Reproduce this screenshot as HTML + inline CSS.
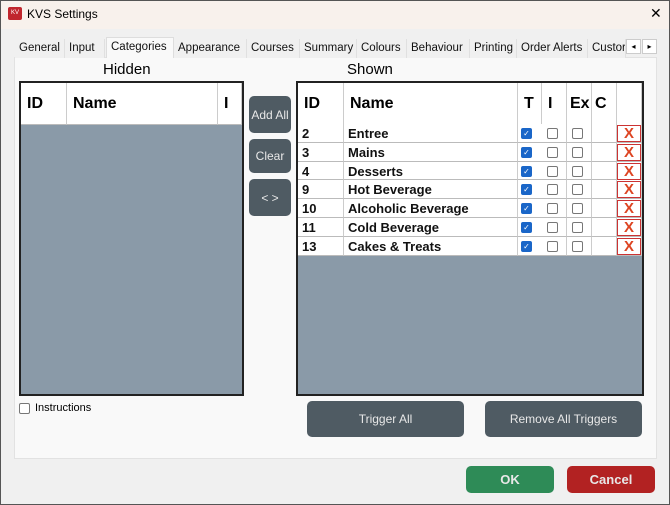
<!DOCTYPE html><html><head><style>
*{box-sizing:border-box;margin:0;padding:0}
body{width:670px;height:505px;background:#f0f0f0;font-family:"Liberation Sans",sans-serif;position:relative;overflow:hidden;}
.frame{position:absolute;left:0;top:0;width:670px;height:505px;border:1px solid #555;pointer-events:none;z-index:9}
.a{position:absolute}
.tab{position:absolute;top:39px;height:19px;font-size:11.5px;line-height:19px;padding:0 4px;background:#f0f0f0;border-right:1px solid #e0e0e0;color:#111;white-space:nowrap;overflow:hidden}
.btn{position:absolute;background:#4f5b63;color:#e8e8e8;border-radius:5px;font-size:12px;display:flex;align-items:center;justify-content:center}
.tbl{position:absolute;background:#8a9aa8;border:2px solid #222}
.hd{position:absolute;top:0;height:42px;background:#fff;font-weight:bold;font-size:16px;line-height:42px;padding-left:6px;border-right:1px solid #ccc;border-bottom:1px solid #bbb}
.cell{position:absolute;height:19px;background:#fff;border-right:1px solid #ccc;border-bottom:1px solid #bbb;font-weight:bold;font-size:13px;line-height:20px;padding-left:4px;color:#111}
.cb{position:absolute;width:11px;height:11px;border:1px solid #777;border-radius:2px;background:#fff}
.ck{background:#1a66c8;border-color:#1a66c8;color:#fff;font-size:8px;line-height:9px;text-align:center}
.x{position:absolute;width:24px;height:17px;border:1px solid #c33;color:#d42;font-weight:bold;font-size:15px;text-align:center;line-height:16px;background:#fff}
</style></head><body>
<div class="frame"></div>
<div class="a" style="left:0;top:0;width:670px;height:29px;background:#f8f1ec"></div>
<div class="a" style="left:8px;top:7px;width:14px;height:13px;background:#c0262d;border-radius:2px;color:#fff;font-size:6px;line-height:13px;text-align:center">KV</div>
<div class="a" style="left:27px;top:7px;font-size:12px">KVS Settings</div>
<div class="a" style="left:650px;top:5px;font-size:14px;font-weight:normal">✕</div>
<div class="a" style="left:14px;top:57px;width:643px;height:402px;background:#f9f9f9;border:1px solid #e2e2e2"></div>
<div class="tab" style="left:15px;width:50px">General</div>
<div class="tab" style="left:65px;width:40px">Input</div>
<div class="tab" style="left:106px;top:37px;height:21px;width:68px;background:#f9f9f9;border:1px solid #ddd;border-bottom:none">Categories</div>
<div class="tab" style="left:174px;width:73px">Appearance</div>
<div class="tab" style="left:247px;width:53px">Courses</div>
<div class="tab" style="left:300px;width:57px">Summary</div>
<div class="tab" style="left:357px;width:50px">Colours</div>
<div class="tab" style="left:407px;width:63px">Behaviour</div>
<div class="tab" style="left:470px;width:47px">Printing</div>
<div class="tab" style="left:517px;width:71px">Order Alerts</div>
<div class="tab" style="left:588px;width:38px">Custor</div>
<div class="a" style="left:626px;top:39px;width:15px;height:15px;background:#fff;border:1px solid #ccc;font-size:8px;line-height:13px;text-align:center">◂</div>
<div class="a" style="left:642px;top:39px;width:15px;height:15px;background:#fff;border:1px solid #ccc;font-size:8px;line-height:13px;text-align:center">▸</div>
<div class="a" style="left:103px;top:61px;font-size:15px">Hidden</div>
<div class="a" style="left:347px;top:61px;font-size:15px">Shown</div>
<div class="tbl" style="left:19px;top:81px;width:225px;height:315px">
<div class="hd" style="left:0;width:46px">ID</div>
<div class="hd" style="left:46px;width:151px">Name</div>
<div class="hd" style="left:197px;width:24px">I</div>
</div>
<div class="btn" style="left:249px;top:96px;width:42px;height:37px">Add All</div>
<div class="btn" style="left:249px;top:139px;width:42px;height:34px">Clear</div>
<div class="btn" style="left:249px;top:179px;width:42px;height:37px">&lt; &gt;</div>
<div class="tbl" style="left:296px;top:81px;width:348px;height:315px">
<div class="hd" style="left:0;width:46px">ID</div>
<div class="hd" style="left:46px;width:174px">Name</div>
<div class="hd" style="left:220px;width:24px">T</div>
<div class="hd" style="left:244px;width:25px">I</div>
<div class="hd" style="left:269px;width:25px;padding-left:3px">Ex</div>
<div class="hd" style="left:294px;width:25px;padding-left:3px">C</div>
<div class="hd" style="left:319px;width:25px"></div>
</div>
<div id="rows"></div>
<script>
var d=[["2","Entree"],["3","Mains"],["4","Desserts"],["9","Hot Beverage"],["10","Alcoholic Beverage"],["11","Cold Beverage"],["13","Cakes & Treats"]],h="";
d.forEach(function(r,i){var y=Math.round(124+i*18.8),hh=Math.round(124+(i+1)*18.8)-y;
h+='<div class="cell" style="left:298px;top:'+y+'px;height:'+hh+'px;width:46px">'+r[0]+'</div>';
h+='<div class="cell" style="left:344px;top:'+y+'px;height:'+hh+'px;width:174px">'+r[1].replace("&","&amp;")+'</div>';
[518,542,567,592,617].forEach(function(x,j){h+='<div class="cell" style="left:'+x+'px;top:'+y+'px;height:'+hh+'px;width:25px"></div>';});
h+='<div class="cb ck" style="left:521px;top:'+(y+4)+'px">✓</div><div class="cb" style="left:547px;top:'+(y+4)+'px"></div><div class="cb" style="left:572px;top:'+(y+4)+'px"></div>';
h+='<div class="x" style="left:617px;top:'+(y+1)+'px">X</div>';});
document.getElementById("rows").innerHTML=h;
</script>
<div class="cb" style="left:19px;top:403px;width:11px;height:11px"></div>
<div class="a" style="left:35px;top:402px;font-size:11px">Instructions</div>
<div class="btn" style="left:307px;top:401px;width:157px;height:36px">Trigger All</div>
<div class="btn" style="left:485px;top:401px;width:157px;height:36px">Remove All Triggers</div>
<div class="btn" style="left:466px;top:466px;width:88px;height:27px;background:#2e8b57;font-weight:bold;font-size:13px">OK</div>
<div class="btn" style="left:567px;top:466px;width:88px;height:27px;background:#b22222;font-weight:bold;font-size:13px">Cancel</div>
</body></html>
